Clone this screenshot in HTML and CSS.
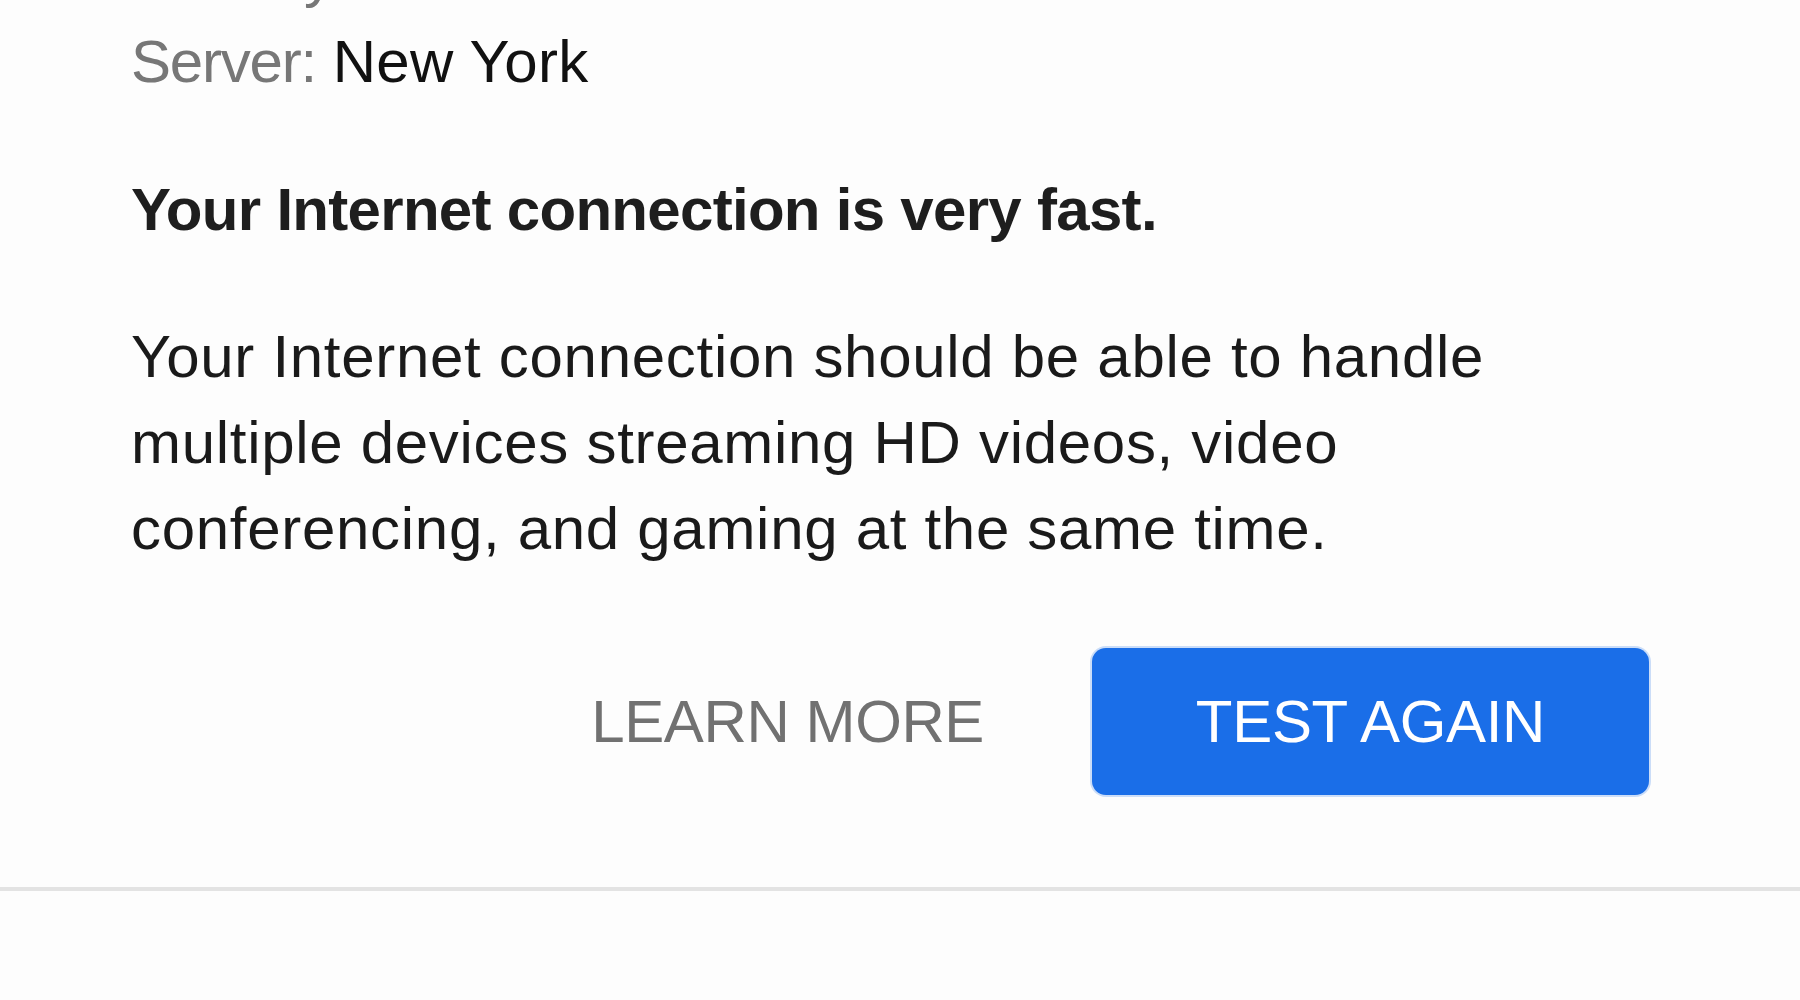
FILE: index.html
```html
<!DOCTYPE html>
<html lang="en">
<head>
<meta charset="utf-8">
<title>Speed test result</title>
<link rel="stylesheet" href="styles.css">
</head>
<body>
<main class="result">
  <div class="stats">
    <div class="stat"><span class="stat-label">Latency:</span> <span class="stat-value">8 ms</span></div>
    <div class="stat"><span class="stat-label">Server:</span> <span class="stat-value">New York</span></div>
  </div>
  <h2 class="verdict">Your Internet connection is very fast.</h2>
  <p class="explain">Your Internet connection should be able to handle multiple devices streaming HD videos, video conferencing, and gaming at the same time.</p>
  <div class="actions">
    <a class="learn-more" href="#">LEARN MORE</a>
    <button class="test-again" type="button">TEST AGAIN</button>
  </div>
</main>
<footer class="footer">
  <span class="footer-item">Feedback</span>
  <span class="footer-item">Privacy</span>
  <span class="footer-item">Terms</span>
</footer>
</body>
</html>
```

FILE: styles.css
```css
html, body {
  margin: 0;
  padding: 0;
}

body {
  width: 1800px;
  height: 1000px;
  overflow: hidden;
  background: #fdfdfd;
  font-family: "Liberation Sans", Arial, Helvetica, sans-serif;
  font-size: 60px;
  line-height: 86px;
  color: #202020;
}

.result {
  padding: 0 151px 92px 131px;
  border-bottom: 4px solid #e3e3e3;
}

.stats {
  margin-top: -67px;
}

.stat {
  height: 86px;
}

.stat-label {
  color: #777777;
  letter-spacing: -1.2px;
}

.stat-value {
  color: #111111;
  letter-spacing: 0.3px;
}

.verdict {
  margin: 62px 0 0 0;
  font-size: 60px;
  line-height: 86px;
  font-weight: bold;
  color: #1e1e1e;
  letter-spacing: -0.7px;
}

.explain {
  margin: 61px 0 0 0;
  max-width: 1440px;
  color: #1a1a1a;
  letter-spacing: 0.7px;
}

.actions {
  margin-top: 76px;
  display: flex;
  justify-content: flex-end;
  align-items: center;
}

.learn-more {
  color: #717171;
  text-decoration: none;
  margin-right: 108px;
  letter-spacing: -0.4px;
}

.test-again {
  width: 557px;
  height: 147px;
  border: none;
  border-radius: 14px;
  background: #1a6ee8;
  box-shadow: 0 0 0 2px rgba(26, 110, 232, 0.22);
  color: #ffffff;
  font-family: inherit;
  font-size: 60px;
  line-height: 86px;
  padding: 0;
  letter-spacing: -0.3px;
}

.footer {
  display: flex;
  justify-content: flex-end;
  gap: 90px;
  padding: 104px 170px 0 0;
  font-size: 40px;
  line-height: 50px;
  color: #e2e2e2;
}
```
